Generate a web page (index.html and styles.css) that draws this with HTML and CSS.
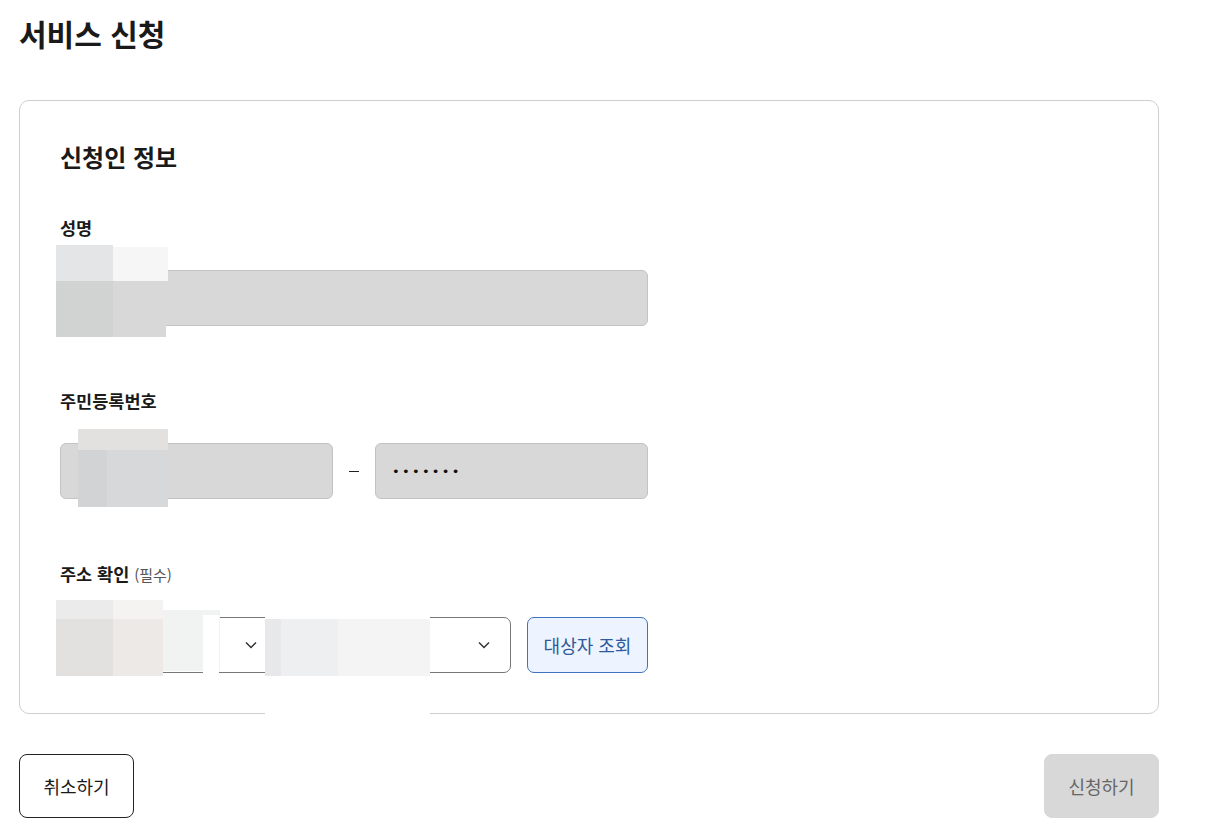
FILE: index.html
```html
<!DOCTYPE html>
<html lang="ko">
<head>
<meta charset="utf-8">
<title>서비스 신청</title>
<link rel="stylesheet" href="styles.css">
</head>
<body>
<main class="page">
  <h1 class="page-title">서비스 신청</h1>

  <section class="card">
    <h2 class="card-title">신청인 정보</h2>

    <div class="field">
      <div class="label">성명</div>
      <div class="input input-full"></div>
    </div>

    <div class="field">
      <div class="label">주민등록번호</div>
      <div class="rrn-row">
        <div class="input input-half"></div>
        <span class="dash"></span>
        <div class="input input-half"><span class="dots">•••••••</span></div>
      </div>
    </div>

    <div class="field field-last">
      <div class="label">주소 확인 <span class="label-sub">(필수)</span></div>
      <div class="addr-row">
        <div class="select">
          <svg class="chev" width="12" height="8" viewBox="0 0 12 8"><path d="M1 1.5 L6 6.5 L11 1.5" fill="none" stroke="#333" stroke-width="1.5"/></svg>
        </div>
        <div class="select">
          <svg class="chev" width="12" height="8" viewBox="0 0 12 8"><path d="M1 1.5 L6 6.5 L11 1.5" fill="none" stroke="#333" stroke-width="1.5"/></svg>
        </div>
        <button class="btn-lookup" type="button">대상자 조회</button>
      </div>
    </div>
  </section>

  <div class="actions">
    <button class="btn btn-cancel" type="button">취소하기</button>
    <button class="btn btn-submit" type="button">신청하기</button>
  </div>

  <div class="redact">
    <i class="r r1"></i><i class="r r2"></i><i class="r r3"></i><i class="r r4"></i>
    <i class="r r5"></i><i class="r r6"></i><i class="r r7"></i>
    <i class="r r8"></i><i class="r r9"></i><i class="r r10"></i><i class="r r11"></i><i class="r r12"></i><i class="r r13"></i>
    <i class="r r18"></i><i class="r r14"></i><i class="r r15"></i><i class="r r16"></i><i class="r r17"></i>
  </div>
</main>
</body>
</html>
```

FILE: styles.css
```css
* { box-sizing: border-box; }

html, body {
  margin: 0;
  padding: 0;
  background: #fff;
}

body {
  font-family: "Noto Sans CJK KR", "Noto Sans", sans-serif;
  color: #1a1a1a;
}

.page {
  position: relative;
  width: 1140px;
  margin-left: 19px;
  padding-top: 12px;
}

.page-title {
  margin: 0;
  font-size: 30px;
  line-height: 42px;
  font-weight: 700;
  color: #1a1a1a;
}

.card {
  margin-top: 46px;
  border: 1px solid #cfcfcf;
  border-radius: 10px;
  padding: 39px 40px 40px;
}

.card-title {
  margin: 0 0 42px;
  font-size: 24px;
  line-height: 34px;
  font-weight: 700;
}

.field { margin-bottom: 63px; }
.field-last { margin-bottom: 0; }

.label {
  font-size: 17.5px;
  line-height: 24px;
  font-weight: 700;
  margin-bottom: 30px;
}

.label-sub {
  font-size: 15px;
  font-weight: 400;
  color: #555;
}

.input {
  height: 56px;
  background: #d8d8d8;
  border: 1px solid #c3c3c3;
  border-radius: 6px;
  display: flex;
  align-items: center;
  padding: 0 16px;
}

.input-full { width: 588px; }

.rrn-row {
  display: flex;
  align-items: center;
  width: 588px;
  gap: 16px;
}

.input-half { flex: 1; }

.dash {
  width: 10px;
  height: 1px;
  background: #222;
}

.dots {
  font-family: "DejaVu Sans", sans-serif;
  font-size: 13px;
  letter-spacing: 2.3px;
  color: #111;
}

.addr-row {
  display: flex;
  align-items: center;
  width: 588px;
  gap: 16px;
}

.select {
  flex: 1;
  height: 56px;
  border: 1px solid #777;
  border-radius: 7px;
  background: #fff;
  display: flex;
  align-items: center;
  justify-content: flex-end;
  padding-right: 20px;
}

.chev { display: block; }

.btn-lookup {
  width: 121px;
  height: 56px;
  border: 1px solid #3f73bf;
  border-radius: 7px;
  background: #edf4ff;
  color: #2d5a9c;
  font-family: inherit;
  font-size: 18px;
  padding: 0;
}

.actions {
  display: flex;
  justify-content: space-between;
  margin-top: 40px;
}

.btn {
  height: 64px;
  width: 115px;
  border-radius: 8px;
  font-family: inherit;
  font-size: 18px;
  padding: 0;
}

.btn-cancel {
  background: #fff;
  border: 1px solid #222;
  color: #1a1a1a;
}

.btn-submit {
  background: #d8d8d8;
  border: 1px solid #d8d8d8;
  color: #666;
}

/* redaction patches lying over the form */
.redact {
  position: absolute;
  left: -19px;
  top: 0;
  width: 0;
  height: 0;
}

.r { position: absolute; display: block; }
.r1  { left: 56px;  top: 245px; width: 57px; height: 36px; background: #e4e5e6; }
.r2  { left: 113px; top: 247px; width: 55px; height: 34px; background: #f6f6f6; }
.r3  { left: 56px;  top: 281px; width: 57px; height: 56px; background: #d1d3d3; }
.r4  { left: 113px; top: 281px; width: 53px; height: 56px; background: #d8d8d8; }
.r5  { left: 78px;  top: 429px; width: 90px; height: 21px; background: #e2e1df; }
.r6  { left: 78px;  top: 450px; width: 29px; height: 57px; background: #d2d3d5; }
.r7  { left: 107px; top: 450px; width: 61px; height: 57px; background: #d7d8da; }
.r8  { left: 56px;  top: 600px; width: 57px; height: 19px; background: #ebebeb; }
.r9  { left: 113px; top: 600px; width: 50px; height: 19px; background: #f5f3f1; }
.r10 { left: 56px;  top: 619px; width: 57px; height: 57px; background: #e3e1df; }
.r11 { left: 113px; top: 619px; width: 50px; height: 57px; background: #ede9e6; }
.r12 { left: 163px; top: 610px; width: 57px; height: 61px; background: #f1f2f2; }
.r13 { left: 203px; top: 615px; width: 16px; height: 58px; background: #fff; }
.r18 { left: 265px; top: 600px; width: 165px; height: 19px; background: #fff; }
.r14 { left: 265px; top: 619px; width: 16px; height: 57px; background: #e8e8ea; }
.r15 { left: 281px; top: 619px; width: 57px; height: 57px; background: #eeeff1; }
.r16 { left: 338px; top: 619px; width: 92px; height: 57px; background: #f4f4f4; }
.r17 { left: 265px; top: 676px; width: 165px; height: 38px; background: #fff; }
```
